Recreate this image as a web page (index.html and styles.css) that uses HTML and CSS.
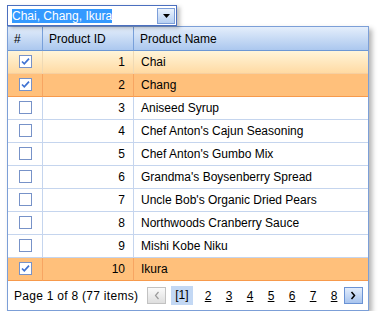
FILE: index.html
```html
<!DOCTYPE html>
<html lang="en">
<head>
  <meta charset="UTF-8">
  <title>Products</title>
  <meta name="viewport" content="width=device-width, initial-scale=1.0">
  <link rel="stylesheet" href="styles.css">
</head>
<body>

  <!-- Auswahl -->
  <div class="combo">
    <span class="combo-text"><span class="combo-sel">Chai, Chang, Ikura</span></span>
    <span class="combo-btn">
      <svg width="7" height="4" viewBox="0 0 7 4"><path d="M0 0H7L3.5 4Z" fill="#000"/></svg>
    </span>
  </div>

  <!-- Tabelle -->
  <div class="grid">
    <div class="row head">
      <div class="cell">#</div>
      <div class="cell">Product ID</div>
      <div class="cell">Product Name</div>
    </div>

    <div class="row hover">
      <div class="cell check"><svg class="cb" width="13" height="13" viewBox="0 0 13 13"><rect x="0.5" y="0.5" width="12" height="12" fill="#fff" stroke="#7792c8"/><path d="M3 6.5L5.3 8.8L10 3.6" fill="none" stroke="#3f72d2" stroke-width="1.7"/></svg></div>
      <div class="cell num">1</div>
      <div class="cell">Chai</div>
    </div>
    <div class="row selected">
      <div class="cell check"><svg class="cb" width="13" height="13" viewBox="0 0 13 13"><rect x="0.5" y="0.5" width="12" height="12" fill="#fff" stroke="#7792c8"/><path d="M3 6.5L5.3 8.8L10 3.6" fill="none" stroke="#3f72d2" stroke-width="1.7"/></svg></div>
      <div class="cell num">2</div>
      <div class="cell">Chang</div>
    </div>
    <div class="row">
      <div class="cell check"><svg class="cb" width="13" height="13" viewBox="0 0 13 13"><rect x="0.5" y="0.5" width="12" height="12" fill="#fff" stroke="#7792c8"/></svg></div>
      <div class="cell num">3</div>
      <div class="cell">Aniseed Syrup</div>
    </div>
    <div class="row">
      <div class="cell check"><svg class="cb" width="13" height="13" viewBox="0 0 13 13"><rect x="0.5" y="0.5" width="12" height="12" fill="#fff" stroke="#7792c8"/></svg></div>
      <div class="cell num">4</div>
      <div class="cell">Chef Anton's Cajun Seasoning</div>
    </div>
    <div class="row">
      <div class="cell check"><svg class="cb" width="13" height="13" viewBox="0 0 13 13"><rect x="0.5" y="0.5" width="12" height="12" fill="#fff" stroke="#7792c8"/></svg></div>
      <div class="cell num">5</div>
      <div class="cell">Chef Anton's Gumbo Mix</div>
    </div>
    <div class="row">
      <div class="cell check"><svg class="cb" width="13" height="13" viewBox="0 0 13 13"><rect x="0.5" y="0.5" width="12" height="12" fill="#fff" stroke="#7792c8"/></svg></div>
      <div class="cell num">6</div>
      <div class="cell">Grandma's Boysenberry Spread</div>
    </div>
    <div class="row">
      <div class="cell check"><svg class="cb" width="13" height="13" viewBox="0 0 13 13"><rect x="0.5" y="0.5" width="12" height="12" fill="#fff" stroke="#7792c8"/></svg></div>
      <div class="cell num">7</div>
      <div class="cell">Uncle Bob's Organic Dried Pears</div>
    </div>
    <div class="row">
      <div class="cell check"><svg class="cb" width="13" height="13" viewBox="0 0 13 13"><rect x="0.5" y="0.5" width="12" height="12" fill="#fff" stroke="#7792c8"/></svg></div>
      <div class="cell num">8</div>
      <div class="cell">Northwoods Cranberry Sauce</div>
    </div>
    <div class="row">
      <div class="cell check"><svg class="cb" width="13" height="13" viewBox="0 0 13 13"><rect x="0.5" y="0.5" width="12" height="12" fill="#fff" stroke="#7792c8"/></svg></div>
      <div class="cell num">9</div>
      <div class="cell">Mishi Kobe Niku</div>
    </div>
    <div class="row selected">
      <div class="cell check"><svg class="cb" width="13" height="13" viewBox="0 0 13 13"><rect x="0.5" y="0.5" width="12" height="12" fill="#fff" stroke="#7792c8"/><path d="M3 6.5L5.3 8.8L10 3.6" fill="none" stroke="#3f72d2" stroke-width="1.7"/></svg></div>
      <div class="cell num">10</div>
      <div class="cell">Ikura</div>
    </div>

    <!-- Seiten -->
    <div class="pager">
      <span class="pager-info">Page 1 of 8 (77 items)</span>
      <span class="pbtn prev"><svg width="6" height="9" viewBox="0 0 6 9"><path d="M4.5 1L1.5 4.5L4.5 8" fill="none" stroke="#9a9a9a" stroke-width="1.2"/></svg></span>
      <span class="pcur">[1]</span>
      <span class="pages">
        <a href="#">2</a>
        <a href="#">3</a>
        <a href="#">4</a>
        <a href="#">5</a>
        <a href="#">6</a>
        <a href="#">7</a>
        <a href="#">8</a>
      </span>
      <span class="pbtn next"><svg width="6" height="9" viewBox="0 0 6 9"><path d="M1.5 1L4.5 4.5L1.5 8" fill="none" stroke="#000" stroke-width="1.5"/></svg></span>
    </div>
  </div>

</body>
</html>
```

FILE: styles.css
```css
body {
  font-family: "Liberation Sans", Arial, sans-serif;
  font-size: 12px;
  color: #000;
  background: #fff;
  margin: 0;
  padding: 5px 0 0 7px;
}

.combo {
  box-sizing: border-box;
  width: 170px;
  height: 21px;
  display: flex;
  align-items: center;
  padding: 2px 1px 1px 4px;
  border: 1px solid #4b6fbf;
  background: #fff;
  box-shadow: 3px 2px 4px rgba(0,0,0,0.25);
  position: relative;
  z-index: 2;
}

.combo-text {
  flex: 1;
  display: flex;
  align-items: center;
}

.combo-sel {
  background: #3399ff;
  color: #fff;
  line-height: 14px;
}

.combo-btn {
  box-sizing: border-box;
  width: 18px;
  height: 16px;
  border: 1px solid #7c9ed9;
  background: linear-gradient(#eaf2fd, #b6cff2);
  display: flex;
  align-items: center;
  justify-content: center;
}

.grid {
  box-sizing: border-box;
  width: 362px;
  border: 1px solid #7c9fd7;
  background: #fff;
  box-shadow: 3px 3px 5px rgba(0,0,0,0.3);
}

.row {
  display: grid;
  grid-template-columns: 35px 91px 1fr;
  height: 23px;
}

.cell {
  box-sizing: border-box;
  display: flex;
  align-items: center;
  padding: 0 7px;
  border-right: 1px solid #c5d5ee;
  border-bottom: 1px solid #c5d5ee;
  white-space: nowrap;
}

.cell:last-child {
  border-right: none;
}

.head {
  height: 24px;
  background: linear-gradient(#e4eefb, #a9c6ee);
}

.head .cell {
  padding-left: 6px;
  border-right-color: #78a0da;
  border-bottom-color: #6b97d4;
}

.num {
  justify-content: flex-end;
  padding-right: 8px;
}

.check {
  justify-content: center;
  padding: 0 0 1px 1px;
}

.cb {
  display: block;
}

.hover {
  background: linear-gradient(#fff5d9, #ffd9a1);
}

.hover .cell {
  border-right-color: #efd9b4;
  border-bottom-color: #f6cfa0;
}

.selected {
  background: #ffc07b;
}

.selected .cell {
  border-right-color: #f7a562;
  border-bottom-color: #f79a4c;
}

.pager {
  height: 29px;
  display: flex;
  align-items: center;
  padding-left: 6px;
}

.pager-info {
  letter-spacing: 0.28px;
}

.pbtn {
  box-sizing: border-box;
  width: 19px;
  height: 17px;
  display: flex;
  align-items: center;
  justify-content: center;
}

.prev {
  margin-left: 9px;
  border: 1px solid #c2c2c2;
  background: linear-gradient(#fafafa, #dedede);
}

.next {
  margin-left: 6px;
  border: 1px solid #6a92d4;
  background: linear-gradient(#e2ecfb, #a8c4ee);
}

.pcur {
  margin-left: 5px;
  padding: 0 4px;
  line-height: 19px;
  background: #c3d8f4;
}

.pages {
  display: flex;
  gap: 14px;
  margin-left: 12px;
}

.pages a {
  width: 7px;
  text-align: center;
  color: #000;
}
```
